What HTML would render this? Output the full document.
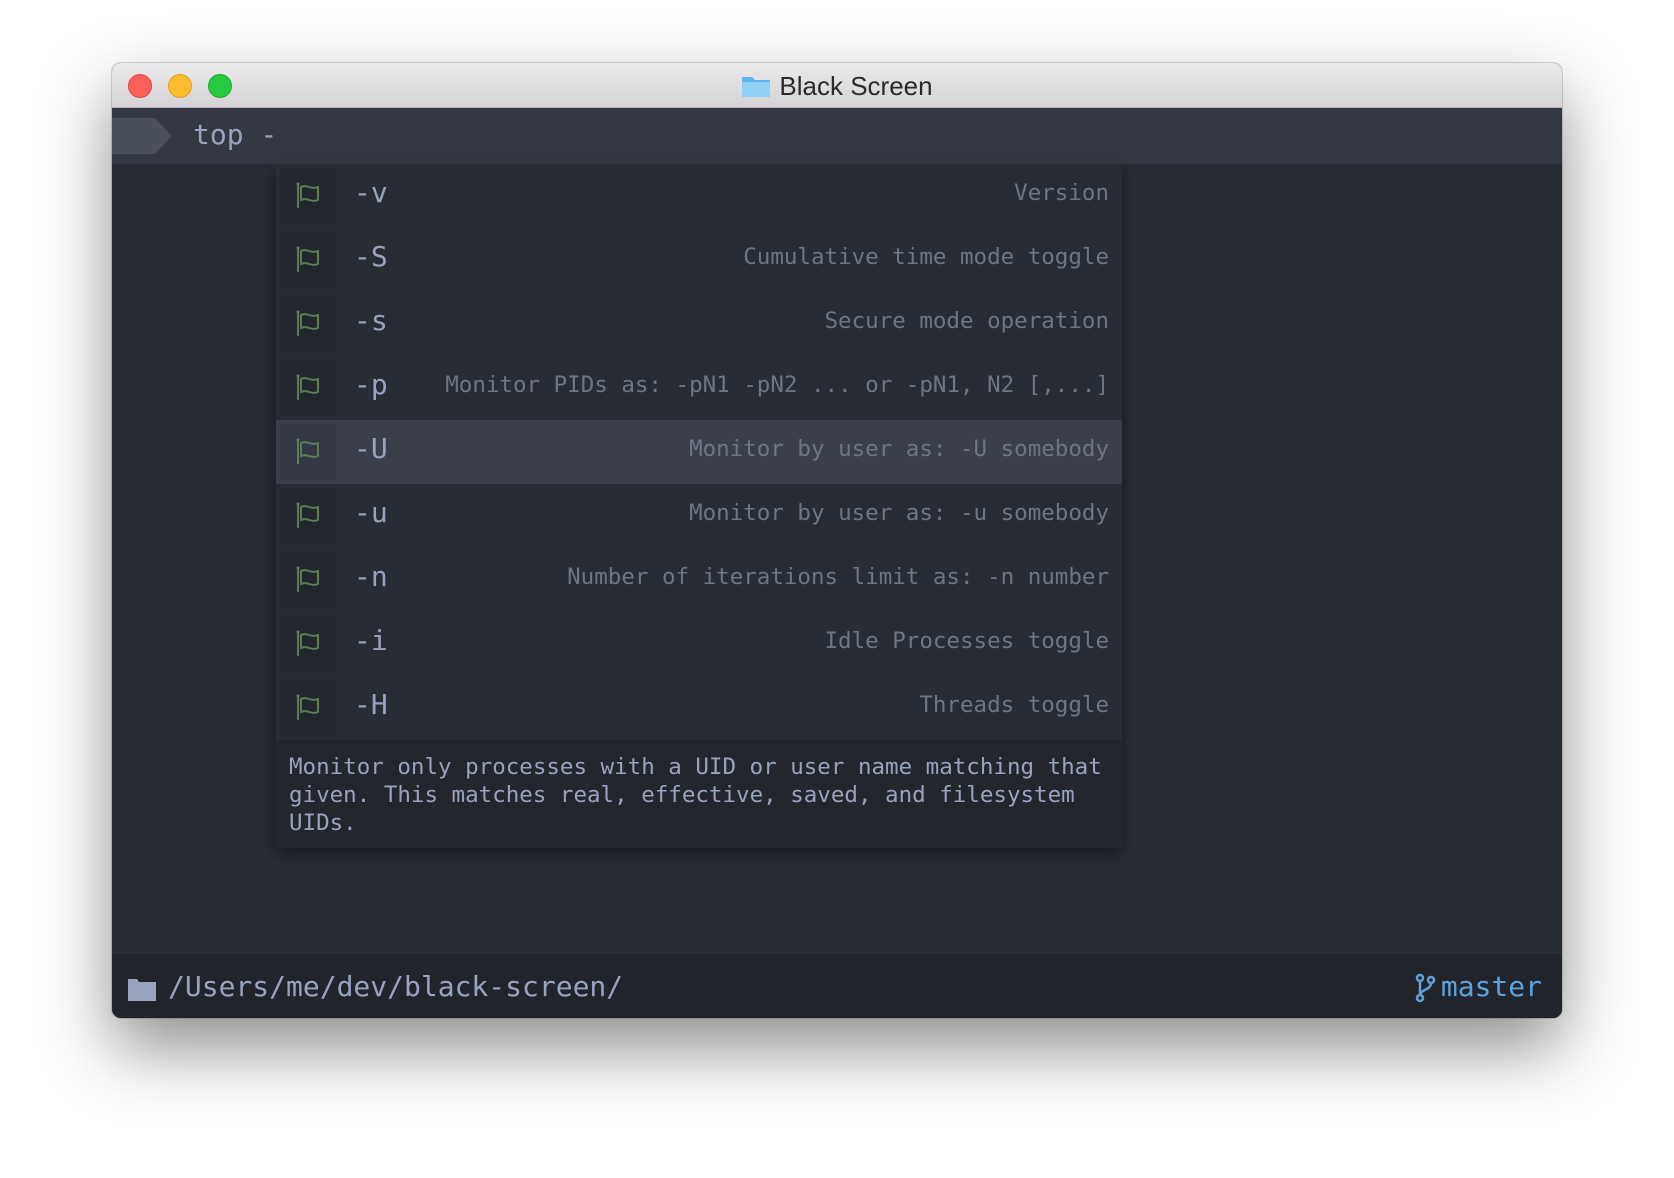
<!DOCTYPE html>
<html><head><meta charset="utf-8"><style>
body{margin:0;width:1674px;height:1178px;background:#fff;position:relative;overflow:hidden;font-family:"DejaVu Sans Mono","Liberation Mono",monospace}
.win{position:absolute;left:112px;top:63px;width:1450px;height:955px;border-radius:9px;overflow:hidden;background:#282c34;box-shadow:0 30px 70px rgba(0,0,0,.45),0 0 0 1px rgba(0,0,0,.15)}
.tb{position:absolute;left:0;top:0;right:0;height:44px;background:linear-gradient(#ebe9eb,#d5d3d5);border-bottom:1px solid #b8b6b8}
.dot{position:absolute;top:11px;width:24px;height:24px;border-radius:50%}
.title{position:absolute;left:0;right:0;top:8px;text-align:center;font:26px "Liberation Sans",sans-serif;color:#2a2a2a}
.prompt{position:absolute;left:0;top:45px;right:0;height:56px;background:#343842}
.mono{color:#98a3bd}
.pop{position:absolute;left:164px;top:101px;width:846px;background:#282c34;box-shadow:0 6px 14px rgba(0,0,0,.45)}
.row{height:64px;position:relative}
.row.h{background:#3a3f4b}
.ic{position:absolute;left:4px;top:4px;width:56px;height:56px;background:#23262d}
.row.h .ic{background:#343844}
.fl{position:absolute;left:78px;top:12px;font-size:28px;color:#98a3bd}
.ds{position:absolute;right:13px;top:16px;font-size:22.5px;color:#6f7683;white-space:pre}
.desc{background:#23262d;padding:13px 13px 11px;font-size:22.5px;line-height:28px;color:#98a3bd;white-space:pre}
.status{position:absolute;left:0;right:0;bottom:0;height:64px;background:#21242b}
</style></head><body>
<div class="win">
 <div class="tb">
  <div class="dot" style="left:16px;background:#fc5f57;border:1px solid #e0443e;box-sizing:border-box"></div>
  <div class="dot" style="left:56px;background:#fdbc2e;border:1px solid #dea123;box-sizing:border-box"></div>
  <div class="dot" style="left:96px;background:#28c840;border:1px solid #1aab29;box-sizing:border-box"></div>
  <div class="title"><svg width="30" height="24" viewBox="0 0 30 24" style="vertical-align:-3px;margin-right:8px"><path d="M1 3h10l3 3h15v17H1z" fill="#5db6ec"/><path d="M1 8h28v15H1z" fill="#8fd0f7"/></svg>Black Screen</div>
 </div>
 <div class="prompt">
  <svg width="62" height="36" style="position:absolute;left:0;top:10px"><path d="M0 0H43L60 18L43 36H0z" fill="#4a4f5c"/></svg>
  <div class="mono" style="position:absolute;left:81px;top:10px;font-size:28px">top -</div>
 </div>
 <div class="pop">
  <div class="row"><div class="ic"></div><div class="fl">-v</div><div class="ds">Version</div></div>
  <div class="row"><div class="ic"></div><div class="fl">-S</div><div class="ds">Cumulative time mode toggle</div></div>
  <div class="row"><div class="ic"></div><div class="fl">-s</div><div class="ds">Secure mode operation</div></div>
  <div class="row"><div class="ic"></div><div class="fl">-p</div><div class="ds">Monitor PIDs as: -pN1 -pN2 ... or -pN1, N2 [,...]</div></div>
  <div class="row h"><div class="ic"></div><div class="fl">-U</div><div class="ds">Monitor by user as: -U somebody</div></div>
  <div class="row"><div class="ic"></div><div class="fl">-u</div><div class="ds">Monitor by user as: -u somebody</div></div>
  <div class="row"><div class="ic"></div><div class="fl">-n</div><div class="ds">Number of iterations limit as: -n number</div></div>
  <div class="row"><div class="ic"></div><div class="fl">-i</div><div class="ds">Idle Processes toggle</div></div>
  <div class="row"><div class="ic"></div><div class="fl">-H</div><div class="ds">Threads toggle</div></div>
  <div class="desc">Monitor only processes with a UID or user name matching that
given. This matches real, effective, saved, and filesystem
UIDs.</div>
 </div>
 <div class="status">
  <svg width="28" height="24" style="position:absolute;left:16px;top:23px"><path d="M0 2h9l2 3h17v19H0z" fill="#98a3bd"/></svg>
  <div class="mono" style="position:absolute;left:56px;top:16px;font-size:28px">/Users/me/dev/black-screen/</div>
  <svg width="22" height="30" style="position:absolute;right:125px;top:19px" fill="none" stroke="#5ea2dc" stroke-width="2.5"><circle cx="5" cy="5" r="3"/><circle cx="5" cy="25" r="3"/><circle cx="16" cy="7" r="3"/><path d="M5 8v14M16 10c0 7-10 6-11 12"/></svg>
  <div style="position:absolute;right:20px;top:16px;font-size:28px;color:#5ea2dc">master</div>
 </div>
</div>
<svg width="0" height="0" style="position:absolute"><defs><g id="f"><path d="M4 4v24" fill="none" stroke="#5d7c58" stroke-width="2"/><path d="M7 7c6-3 10 3 17 0v13c-7 3-11-3-17 0z" fill="none" stroke="#5d7c58" stroke-width="2"/><circle cx="4" cy="4" r="1.5" fill="#5d7c58"/></g></defs></svg>
<script>
document.querySelectorAll('.ic').forEach(function(e){e.innerHTML='<svg width="56" height="56"><use href="#f" x="14" y="12"/></svg>'});
</script>
</body></html>
